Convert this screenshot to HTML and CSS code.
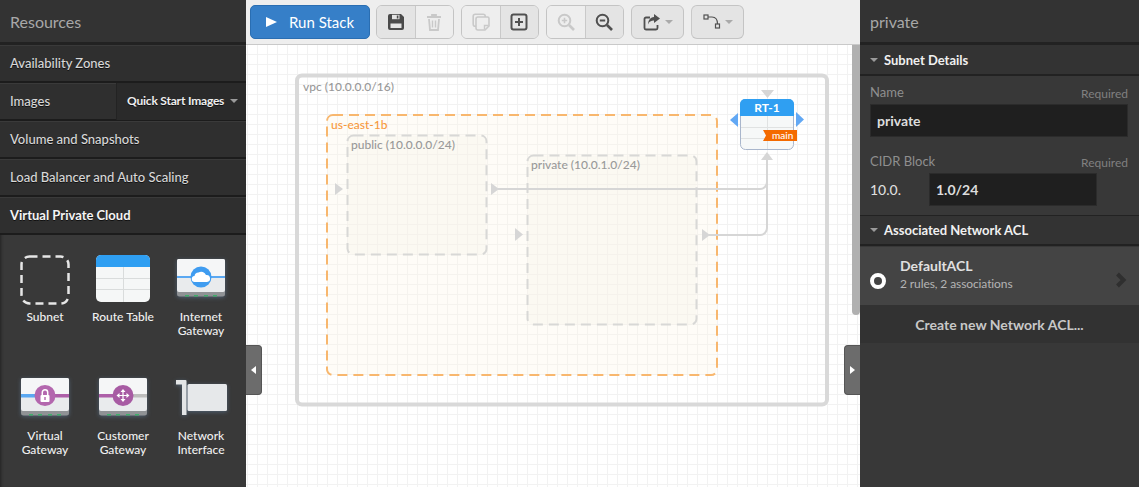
FILE: index.html
```html
<!DOCTYPE html>
<html lang="en">
<head>
    <meta charset="UTF-8">
    <meta name="viewport" content="width=device-width, initial-scale=1.0">
    <title>Stack Designer</title>
    <link rel="stylesheet" href="styles.css">
</head>
<body>
<div class="app">

  <aside class="resources">
    <h2 class="panel-title">Resources</h2>
    <div class="res-row">Availability Zones</div>
    <div class="res-row res-row-split">
      <span class="res-row-label">Images</span>
      <span class="res-select">Quick Start Images <i class="caret"></i></span>
    </div>
    <div class="res-row">Volume and Snapshots</div>
    <div class="res-row">Load Balancer and Auto Scaling</div>
    <div class="res-row res-row-active">Virtual Private Cloud</div>

    <div class="palette">
      <div class="palette-item">
        <svg class="palette-icon" viewBox="0 0 54 54">
          <rect x="3.500" y="3.500" width="47" height="47" rx="8" fill="none" stroke="#e6e6e6" stroke-width="2.500" stroke-dasharray="8 5"/>
        </svg>
        <span>Subnet</span>
      </div>
      <div class="palette-item">
        <svg class="palette-icon" viewBox="0 -2 54 54">
          <rect x="0" y="0" width="54" height="47" rx="5" fill="#f5f7f7"/>
          <path d="M0 12V5a5 5 0 0 1 5-5h44a5 5 0 0 1 5 5v7z" fill="#2f9ff2"/>
          <path d="M0 23.500h54M0 34.500h54M27.500 12v35" stroke="#d9dcdc" fill="none"/>
        </svg>
        <span>Route Table</span>
      </div>
      <div class="palette-item">
        <svg class="palette-icon icon-glow" viewBox="0 -4 54 54">
          <use href="#gateway-box"/>
          <rect x="3" y="19" width="48" height="2" fill="#5aa8f2"/>
          <circle cx="27" cy="20" r="10.500" fill="#3f9cf0"/>
          <path d="M21 25a3 3 0 0 1-.5-6 4 4 0 0 1 4-3.500 5 5 0 0 1 7.500 2.500 3.500 3.500 0 0 1 1 7z" fill="#fff"/>
        </svg>
        <span>Internet<br>Gateway</span>
      </div>
      <div class="palette-item palette-item-low">
        <svg class="palette-icon icon-glow" viewBox="0 -4 54 54">
          <use href="#gateway-box"/>
          <rect x="3" y="18" width="16" height="3.500" fill="#5aa8f2"/>
          <rect x="35" y="18" width="16" height="3.500" fill="#ad5fa8"/>
          <circle cx="27" cy="19.500" r="10.500" fill="#b367ae"/>
          <rect x="22.500" y="19" width="9" height="7" rx="1" fill="#fff"/>
          <path d="M24.300 19v-2.500a2.700 2.700 0 0 1 5.400 0V19" fill="none" stroke="#fff" stroke-width="1.500"/>
          <rect x="26.300" y="21" width="1.400" height="3" fill="#b367ae"/>
        </svg>
        <span>Virtual<br>Gateway</span>
      </div>
      <div class="palette-item palette-item-low">
        <svg class="palette-icon icon-glow" viewBox="0 -4 54 54">
          <use href="#gateway-box"/>
          <rect x="3" y="18" width="16" height="3.500" fill="#ad5fa8"/>
          <rect x="35" y="18" width="16" height="3.500" fill="#bdbdbd"/>
          <circle cx="27" cy="19.500" r="10.500" fill="#a75ba3"/>
          <path d="M27 13l2.500 3h-5zM27 26l2.500-3h-5zM20.500 19.500l3-2.500v5zM33.500 19.500l-3-2.500v5z" fill="#fff"/>
          <path d="M27 15v9M22.500 19.500h9" stroke="#fff" stroke-width="1.200"/>
        </svg>
        <span>Customer<br>Gateway</span>
      </div>
      <div class="palette-item palette-item-low">
        <svg class="palette-icon icon-glow" viewBox="0 0 54 54">
          <path d="M2 8h9.500a1 1 0 0 1 1 1V43H8V12.500H2z" fill="#e3e5e6"/>
          <rect x="13.500" y="12" width="39.500" height="27" rx="1.500" fill="#e6e8ea"/>
        </svg>
        <span>Network<br>Interface</span>
      </div>
    </div>
  </aside>

  <main class="designer">
    <div class="toolbar">
      <button class="btn-run"><i class="run-arrow"></i>Run Stack</button>

      <div class="btn-group">
        <button class="btn">
          <svg class="ico" viewBox="0 0 18 18"><path d="M1 3a2 2 0 0 1 2-2h11l3 3v11a2 2 0 0 1-2 2H3a2 2 0 0 1-2-2z" fill="#4a4a4a"/><rect x="5" y="1.800" width="7.500" height="4.400" fill="#e4e4e4"/><rect x="9.800" y="2.500" width="1.600" height="3" fill="#4a4a4a"/><rect x="3.500" y="10.500" width="11" height="4.500" fill="#e4e4e4"/></svg>
        </button>
        <button class="btn btn-off">
          <svg class="ico" viewBox="0 0 18 18"><path d="M2 4h14M7 4V2h4v2M4 6l1 11h8l1-11" fill="none" stroke="#c9c9c9" stroke-width="1.800"/><path d="M7.500 7.500v7M10.500 7.500v7" stroke="#c9c9c9" stroke-width="1.400"/></svg>
        </button>
      </div>

      <div class="btn-group">
        <button class="btn btn-off">
          <svg class="ico" viewBox="0 0 18 18"><rect x="1.200" y="1.200" width="12" height="12" rx="2" fill="none" stroke="#c9c9c9" stroke-width="1.600"/><path d="M6 4h9.500a1.500 1.500 0 0 1 1.500 1.500V13l-4 4H6a2 2 0 0 1-2-2V6a2 2 0 0 1 2-2z" fill="#eee" stroke="#c9c9c9" stroke-width="1.600"/><path d="M12.500 16.500V12.500h4" fill="none" stroke="#c9c9c9" stroke-width="1.400"/></svg>
        </button>
        <button class="btn">
          <svg class="ico" viewBox="0 0 18 18"><rect x="1.500" y="1.500" width="15" height="15" rx="2" fill="none" stroke="#505050" stroke-width="2"/><path d="M9 5v8M5 9h8" stroke="#505050" stroke-width="2"/></svg>
        </button>
      </div>

      <div class="btn-group">
        <button class="btn btn-off">
          <svg class="ico" viewBox="0 0 18 18"><circle cx="7.500" cy="7.500" r="5.800" fill="none" stroke="#c9c9c9" stroke-width="2"/><path d="M12 12l5 5" stroke="#c9c9c9" stroke-width="2.600"/><path d="M7.500 4.800v5.400M4.800 7.500h5.400" stroke="#c9c9c9" stroke-width="1.600"/></svg>
        </button>
        <button class="btn">
          <svg class="ico" viewBox="0 0 18 18"><circle cx="7.500" cy="7.500" r="5.800" fill="none" stroke="#505050" stroke-width="2"/><path d="M12 12l5 5" stroke="#505050" stroke-width="2.600"/><path d="M4.800 7.500h5.400" stroke="#505050" stroke-width="1.800"/></svg>
        </button>
      </div>

      <button class="btn btn-single">
        <svg class="ico" viewBox="0 0 18 18"><path d="M7 4.500H3a1.500 1.500 0 0 0-1.500 1.500v9A1.500 1.500 0 0 0 3 16.500h10a1.500 1.500 0 0 0 1.500-1.500v-3" fill="none" stroke="#505050" stroke-width="1.800"/><path d="M11 1l6 4.500-6 4.500V7.500c-3 0-5 1-6 4 0-4 2-7 6-7.500z" fill="#505050"/></svg>
        <i class="caret caret-light"></i>
      </button>
      <button class="btn btn-single">
        <svg class="ico" viewBox="0 0 18 18"><path d="M4 4h5c4 0 5.500 3 5.500 7" fill="none" stroke="#505050" stroke-width="1.200"/><rect x="1" y="2" width="4" height="4" fill="#e4e4e4" stroke="#505050" stroke-width="1.200"/><rect x="12.500" y="11" width="4" height="4" fill="#e4e4e4" stroke="#505050" stroke-width="1.200"/></svg>
        <i class="caret caret-light"></i>
      </button>
    </div>

    <div class="canvas">
      <svg class="diagram" viewBox="246 45 614 442">
        <rect class="vpc" x="297" y="75.500" width="530" height="329" rx="5"/>
        <text class="group-label" x="303" y="91">vpc (10.0.0.0/16)</text>

        <rect class="az" x="327" y="115" width="390" height="260" rx="6"/>
        <text class="az-label" x="331" y="129">us-east-1b</text>

        <rect class="subnet" x="347.500" y="135.500" width="139" height="119" rx="6"/>
        <text class="group-label" x="351" y="149">public (10.0.0.0/24)</text>
        <rect class="subnet" x="527.500" y="155.500" width="169" height="169" rx="6"/>
        <text class="group-label" x="531" y="169">private (10.0.1.0/24)</text>

        <path class="line" d="M498 189H760a7 7 0 0 0 7-7V158"/>
        <path class="line" d="M709 235H760a7 7 0 0 0 7-7V158"/>

        <path class="port" d="M335 183l8 6-8 6z"/>
        <path class="port" d="M491 183l8 6-8 6z"/>
        <path class="port" d="M515 228l8 6.500-8 6.500z"/>
        <path class="port" d="M702 229l8 6-8 6z"/>
        <path class="port" d="M761 160l6-8 6 8z"/>
        <path class="port" d="M761 90h13l-6.500 8z"/>

        <path class="port-blue" d="M738 113l-8 7 8 7z"/>
        <path class="port-blue" d="M796 112l8 7.500-8 7.500z"/>

        <rect class="rt-body" x="740.500" y="99.500" width="53" height="50" rx="5"/>
        <path class="rt-head" d="M740 116v-12a5 5 0 0 1 5-5h44a5 5 0 0 1 5 5v12z"/>
        <path class="rt-grid" d="M741 127.500h52M741 138.500h52M767.500 116v33"/>
        <text class="rt-name" x="767" y="112">RT-1</text>
        <path class="rt-tag" d="M763 130h34v11h-34l3-5.500z"/>
        <text class="rt-tag-text" x="772" y="139">main</text>
      </svg>
      <div class="scroll-thumb"></div>
    </div>
  </main>

  <aside class="inspector">
    <h2 class="panel-title">private</h2>

    <div class="section-head"><i class="caret"></i>Subnet Details</div>
    <div class="section-body">
      <div class="field-head"><span>Name</span><small>Required</small></div>
      <div class="input">private</div>
      <div class="field-head field-head-second"><span>CIDR Block</span><small>Required</small></div>
      <div class="cidr-row">
        <span class="cidr-prefix">10.0.</span>
        <div class="input input-cidr">1.0/24</div>
      </div>
    </div>

    <div class="section-head section-head-second"><i class="caret"></i>Associated Network ACL</div>
    <div class="acl-row">
      <i class="radio"></i>
      <div class="acl-text">
        <strong>DefaultACL</strong>
        <span>2 rules, 2 associations</span>
      </div>
      <svg class="acl-arrow" viewBox="0 0 12 16"><path d="M2.500 2l6 6-6 6" fill="none" stroke="#2f2f2f" stroke-width="4"/></svg>
    </div>
    <div class="acl-create">Create new Network ACL...</div>
  </aside>

  <div class="handle handle-left"><i class="handle-arrow-l"></i></div>
  <div class="handle handle-right"><i class="handle-arrow-r"></i></div>
</div>

<svg class="defs" width="0" height="0">
  <defs>
    <g id="gateway-box">
      <path d="M3 32h48v5a2.500 2.500 0 0 1-2.500 2.500h-43A2.500 2.500 0 0 1 3 37z" fill="#8f9295"/>
      <path d="M11 38.800h4M20 38.800h4M30 38.800h4M39 38.800h4" stroke="#3fae6b" stroke-width="1.400"/>
      <rect x="3" y="2" width="48" height="33" rx="2" fill="#e9ebed"/>
      <rect x="3" y="2" width="48" height="17" rx="2" fill="#f5f6f7"/>
    </g>
  </defs>
</svg>
</body>
</html>
```

FILE: styles.css
```css
* {
    box-sizing: border-box;
}
html, body {
    margin: 0;
    height: 100%;
    overflow: hidden;
}
body {
    font-family: Lato, "Liberation Sans", sans-serif;
    font-size: 13px;
    color: #ddd;
    background-color: #383838;
}
.app {
    position: relative;
    display: flex;
    height: 487px;
}
.defs {
    position: absolute;
}

/* side panels */
.resources {
    width: 246px;
    flex: none;
    background-color: #393939;
    box-shadow: inset 3px 0 3px -2px #222;
}
.inspector {
    width: 279px;
    flex: none;
    background-color: #383838;
}
.panel-title {
    height: 45px;
    margin: 0;
    padding: 0 10px;
    font-size: 16px;
    font-weight: 400;
    line-height: 44px;
    color: #a8a8a8;
    background-color: #333;
    border-bottom: 2px solid #222;
    box-shadow: inset 0 -1px 0 #222;
}
.res-row {
    display: flex;
    align-items: center;
    height: 38px;
    padding: 0 10px 2px;
    color: #d8d8d8;
    font-weight: 500;
    background-color: #2f2f2f;
    border-bottom: 1px solid #1c1c1c;
    box-shadow: inset 0 -1px 0 #1c1c1c, inset 0 1px 0 #3a3a3a;
    text-shadow: 0 1px 0 #111;
}
.res-row-split {
    padding: 0;
}
.res-row-label {
    width: 116px;
    padding: 0 0 2px 10px;
}
.res-select {
    display: flex;
    align-items: center;
    flex: 1;
    height: 100%;
    padding: 0 0 2px 10px;
    font-size: 12px;
    font-weight: 700;
    letter-spacing: -0.2px;
    color: #eee;
    background-color: #2a2a2a;
    border-left: 1px solid #232323;
}
.res-row-active {
    color: #f5f5f5;
    font-weight: 700;
}
.caret {
    display: inline-block;
    width: 0;
    height: 0;
    border-left: 4px solid transparent;
    border-right: 4px solid transparent;
    border-top: 4px solid #9a9a9a;
}
.res-select .caret {
    margin-left: 6px;
}

/* palette */
.palette {
    display: grid;
    grid-template-columns: repeat(3, 78px);
    padding: 18px 0 0 6px;
}
.palette-item {
    display: flex;
    flex-direction: column;
    align-items: center;
    height: 119px;
    font-size: 12px;
    line-height: 14px;
    text-align: center;
    color: #f0f0f0;
    font-weight: 500;
}
.palette-icon {
    display: block;
    width: 54px;
    height: 54px;
    margin-bottom: 3px;
    overflow: visible;
}
.icon-glow {
    filter: drop-shadow(0 1px 2px rgba(120, 170, 220, 0.35));
}

/* toolbar */
.designer {
    position: relative;
    flex: 1;
    min-width: 0;
    display: flex;
    flex-direction: column;
}
.toolbar {
    display: flex;
    align-items: center;
    gap: 7px;
    height: 45px;
    padding: 0 0 1px 4px;
    background-color: #eee;
    border-bottom: 1px solid #c9c9c9;
}
.btn-run {
    display: flex;
    align-items: center;
    width: 120px;
    height: 34px;
    margin-right: -1px;
    padding: 0 0 0 15px;
    font: 400 15px Lato, sans-serif;
    color: #fff;
    background-color: #367fc8;
    border: 1px solid #2a6eb2;
    border-radius: 5px;
}
.run-arrow {
    width: 0;
    height: 0;
    margin-right: 12px;
    border-top: 5.500px solid transparent;
    border-bottom: 5.500px solid transparent;
    border-left: 11px solid #fff;
}
.btn-group {
    display: flex;
    width: 78px;
    height: 34px;
    border: 1px solid #c4c4c4;
    border-radius: 6px;
    overflow: hidden;
}
.btn {
    display: flex;
    align-items: center;
    justify-content: center;
    flex: 1;
    height: 100%;
    padding: 0;
    background-color: #e4e4e4;
    border: 0;
}
.btn + .btn {
    border-left: 1px solid #c9c9c9;
}
.btn-off {
    background-color: #eee;
}
.btn-single {
    flex: none;
    gap: 4px;
    width: 53px;
    height: 34px;
    border: 1px solid #c4c4c4;
    border-radius: 6px;
}
.ico {
    width: 18px;
    height: 18px;
}
.caret-light {
    border-top-color: #aaa;
}

/* canvas */
.canvas {
    position: relative;
    flex: 1;
    min-height: 0;
    background-color: #fff;
    background-image:
        linear-gradient(#f2f2f2 1px, transparent 1px),
        linear-gradient(90deg, #f2f2f2 1px, transparent 1px);
    background-size: 10px 10px;
    background-position: 1px 9px;
}
.diagram {
    display: block;
    width: 100%;
    height: 100%;
}
.scroll-thumb {
    position: absolute;
    top: 0;
    right: 0;
    width: 8px;
    height: 270px;
    background-color: #b0b0b0;
    border-radius: 0 0 4px 4px;
}
.vpc {
    fill: none;
    stroke: #d9d9d9;
    stroke-width: 4px;
}
.az {
    fill: #fbf4e4;
    fill-opacity: 0.3;
    stroke: #f8b76e;
    stroke-width: 2px;
    stroke-dasharray: 10 6;
}
.subnet {
    fill: #f5f2e8;
    fill-opacity: 0.3;
    stroke: #d8d8d6;
    stroke-width: 2px;
    stroke-dasharray: 10 6;
}
.group-label {
    font-size: 12px;
    font-weight: 500;
    fill: #999;
}
.az-label {
    font-size: 12px;
    font-weight: 500;
    fill: #f79a3e;
}
.line {
    fill: none;
    stroke: #d6d6d6;
    stroke-width: 2px;
}
.port {
    fill: #d6d6d6;
}
.port-blue {
    fill: #62a8f4;
}
.rt-body {
    fill: #f6f8f8;
    stroke: #a9b6cc;
}
.rt-head {
    fill: #2f9ff2;
}
.rt-grid {
    fill: none;
    stroke: #e0e2e2;
}
.rt-name {
    font-size: 12px;
    font-weight: 700;
    fill: #fff;
    text-anchor: middle;
}
.rt-tag {
    fill: #f46a00;
}
.rt-tag-text {
    font-size: 10px;
    font-weight: 500;
    fill: #fff;
}

/* inspector */
.section-head {
    display: flex;
    align-items: center;
    height: 31px;
    padding-left: 10px;
    font-weight: 700;
    color: #f0f0f0;
    background-color: #333;
    border-bottom: 2px solid #222;
}
.section-head .caret {
    margin-right: 6px;
}
.section-head-second {
    height: 30px;
}
.section-body {
    height: 140px;
    padding: 8px 11px 0 10px;
    border-bottom: 1px solid #222;
}
.field-head {
    display: flex;
    justify-content: space-between;
    align-items: flex-start;
    height: 20px;
    color: #8f8f8f;
}
.field-head small {
    margin-top: 2px;
    font-size: 12px;
    color: #808080;
}
.field-head-second {
    margin-top: 16px;
}
.input {
    height: 33px;
    padding-left: 6px;
    font-size: 14px;
    font-weight: 700;
    line-height: 31px;
    color: #ddd;
    background-color: #1f1f1f;
    border: 1px solid #2b2b2b;
}
.cidr-row {
    display: flex;
    align-items: center;
}
.cidr-prefix {
    width: 59px;
    font-size: 14px;
    font-weight: 500;
}
.input-cidr {
    width: 168px;
}
.acl-row {
    display: flex;
    align-items: center;
    height: 59px;
    padding: 0 12px 0 10px;
    background-color: #444;
    border-top: 1px solid #383838;
}
.radio {
    width: 16px;
    height: 16px;
    margin: 10px 14px 0 0;
    background-color: #444;
    border: 4px solid #fff;
    border-radius: 50%;
}
.acl-text {
    display: flex;
    flex-direction: column;
    flex: 1;
    margin-top: -5px;
}
.acl-text strong {
    margin-bottom: 2px;
    font-size: 14px;
    font-weight: 700;
    color: #e0e0e0;
}
.acl-text span {
    font-size: 12px;
    letter-spacing: -0.1px;
    color: #b4b4b4;
}
.acl-arrow {
    width: 12px;
    height: 16px;
    margin-top: 8px;
}
.acl-create {
    height: 38px;
    font-size: 14px;
    font-weight: 700;
    line-height: 40px;
    text-align: center;
    color: #c8c8c8;
    background-color: #323232;
}

/* collapse handles sit over the canvas edges */
.handle {
    position: absolute;
    top: 345px;
    display: flex;
    align-items: center;
    justify-content: center;
    width: 16px;
    height: 50px;
    background-color: #6c6c6c;
    border: 1px solid #555;
}
.handle-left {
    left: 246px;
    border-left: 0;
    border-radius: 0 4px 4px 0;
}
.handle-right {
    left: 844px;
    border-right: 0;
    border-radius: 4px 0 0 4px;
}
.handle-arrow-l, .handle-arrow-r {
    width: 0;
    height: 0;
    border-top: 4px solid transparent;
    border-bottom: 4px solid transparent;
}
.handle-arrow-l {
    border-right: 5px solid #fff;
}
.handle-arrow-r {
    border-left: 5px solid #fff;
}
```
